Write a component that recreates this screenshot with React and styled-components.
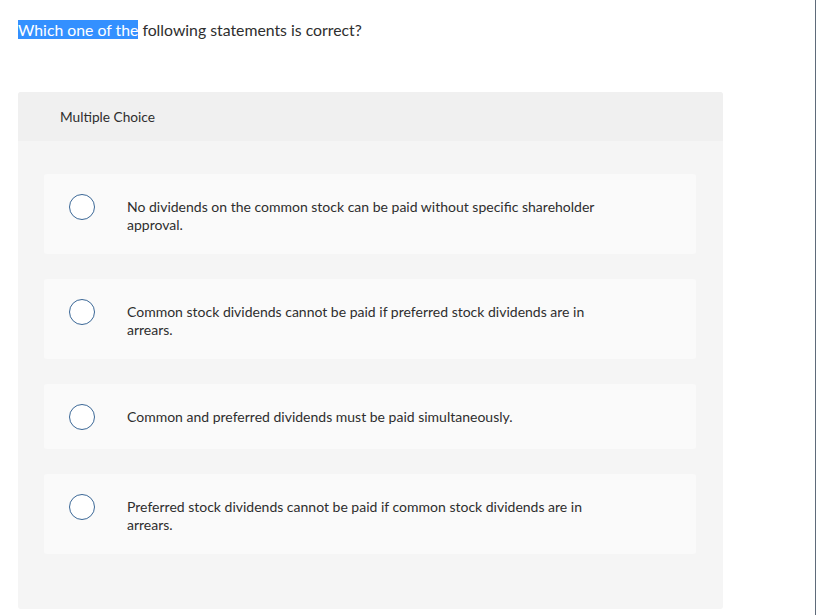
import React from "react";
import styled, { createGlobalStyle } from "styled-components";

const Global = createGlobalStyle`
  html, body { margin: 0; padding: 0; background: #fff; }
  body { font-family: "Lato", "Liberation Sans", sans-serif; color: #333; }
`;

const Page = styled.div`
  width: 816px;
  min-height: 615px;
  box-sizing: border-box;
  border-right: 1px solid #5f6b7a;
  padding: 19px 0 0 18px;
`;

const Question = styled.p`
  margin: 0;
  font-size: 15.8px;
  line-height: 22px;
  color: #2e2e2e;
`;

const Selected = styled.span`
  background: #3390ff;
  color: #fff;
`;

const Panel = styled.section`
  margin-top: 51px;
  width: 705px;
  border-radius: 3px;
  overflow: hidden;
  background: #f5f5f5;
`;

const PanelHeader = styled.div`
  height: 49px;
  display: flex;
  align-items: center;
  padding-left: 42px;
  background: #f0f0f0;
  font-size: 13.7px;
  color: #2e2e2e;
`;

const Options = styled.div`
  display: flex;
  flex-direction: column;
  gap: 25px;
  padding: 33px 27px 55px 26px;
`;

const Option = styled.label`
  display: flex;
  align-items: flex-start;
  gap: 32px;
  padding: 24px 25px 20px;
  background: #fafafa;
  border-radius: 3px;
  cursor: pointer;
`;

const Radio = styled.span`
  flex: none;
  width: 24px;
  height: 24px;
  border: 1.5px solid #3a6796;
  border-radius: 50%;
  margin: -4px 0 -1px;
  background: #fff;
`;

const OptionText = styled.span`
  max-width: 475px;
  font-size: 14px;
  line-height: 18px;
  color: #2e2e2e;
`;

const choices = [
  "No dividends on the common stock can be paid without specific shareholder approval.",
  "Common stock dividends cannot be paid if preferred stock dividends are in arrears.",
  "Common and preferred dividends must be paid simultaneously.",
  "Preferred stock dividends cannot be paid if common stock dividends are in arrears.",
];

export default function App() {
  return (
    <>
      <Global />
      <Page>
        <Question>
          <Selected>Which one of the</Selected> following statements is correct?
        </Question>
        <Panel>
          <PanelHeader>Multiple Choice</PanelHeader>
          <Options>
            {choices.map((c) => (
              <Option key={c}>
                <Radio />
                <OptionText>{c}</OptionText>
              </Option>
            ))}
          </Options>
        </Panel>
      </Page>
    </>
  );
}
